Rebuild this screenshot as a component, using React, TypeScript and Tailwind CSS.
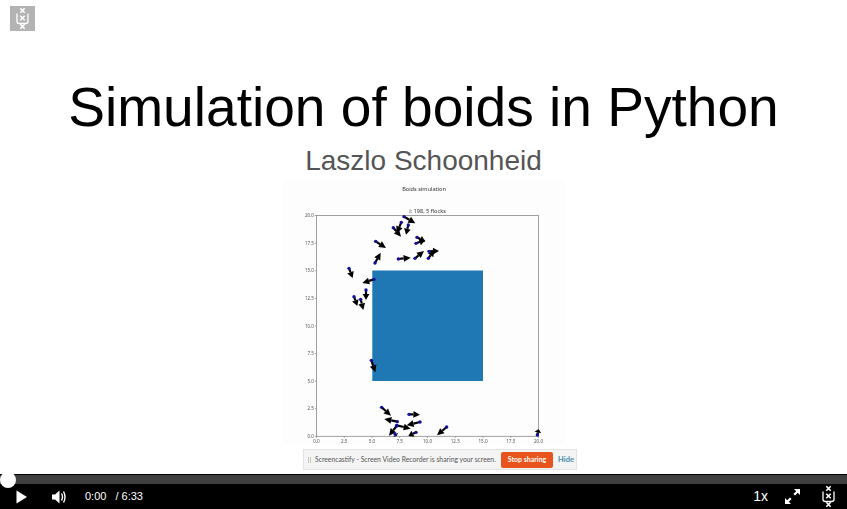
const z2: number[][] = [
  [372,110,406,130],[364,127,350,160],[340,143,363,170],[385,135,378,164],[411,172,436,185],[408,190,436,180],
  [287,184,318,204],[285,249,302,218],[355,237,392,233],[405,235,432,213],[445,235,462,212],[447,214,477,213],
  [207,265,218,294],[282,298,247,309],[258,330,258,360],[222,350,232,378],[242,358,250,390],
];
const z3: number[][] = [
  [274,91,286,127],[305,232,333,257],[387,253,420,254],[352,275,313,267],[420,276,380,286],[350,286,392,296],
  [350,288,327,317],[500,291,471,316],[408,307,385,318],[345,312,350,318],[772,315,776,297],
];
const arrows = [
  ...z2.map(([a,b,c,d]) => [280+a/3,180+b/3,280+c/3,180+d/3]),
  ...z3.map(([a,b,c,d]) => [280+a/3,330+b/3,280+c/3,330+d/3]),
];
const xt = ["0.0","2.5","5.0","7.5","10.0","12.5","15.0","17.5","20.0"];

function Arrow({ a }: { a: number[] }) {
  const [x1,y1,x2,y2] = a;
  const dx = x2-x1, dy = y2-y1, l = Math.hypot(dx,dy) || 1;
  const ux = dx/l, uy = dy/l, h = Math.min(7, l*0.6), w = 3.4;
  const bx = x2-ux*h, by = y2-uy*h;
  return (
    <g>
      <line x1={x1} y1={y1} x2={bx} y2={by} stroke="#000" strokeWidth={2.2} />
      <polygon points={`${x2},${y2} ${bx-uy*w},${by+ux*w} ${bx+uy*w},${by-ux*w}`} fill="#000" />
      <circle cx={x1} cy={y1} r={1.7} fill="#14109e" />
    </g>
  );
}

function Chart() {
  return (
    <svg width="282" height="264" viewBox="283 181 282 264" className="block bg-[#fdfdfd]" style={{ filter: "blur(0.35px)" }}>
      <text x="424" y="190.5" fontSize="5.6" textAnchor="middle" fill="#333" fontFamily="Noto Sans">Boids simulation</text>
      <text x="427.5" y="213" fontSize="5.6" textAnchor="middle" fill="#333" fontFamily="Noto Sans">i: 198, 5 flocks</text>
      <rect x="372.3" y="270.5" width="110.7" height="110.5" fill="#1f77b4" />
      <rect x="316.5" y="215.5" width="222" height="220.8" fill="none" stroke="#8a8a8a" strokeWidth="0.8" />
      {xt.map((t,i) => {
        const x = 316.5+i*27.75;
        const y = 436.3-i*27.6;
        return (
          <g key={t}>
            <line x1={x} y1={436.3} x2={x} y2={438} stroke="#777" strokeWidth="0.6" />
            <text x={x} y={442.5} fontSize="4.6" textAnchor="middle" fill="#555" fontFamily="Noto Sans">{t}</text>
            <line x1={314.8} y1={y} x2={316.5} y2={y} stroke="#777" strokeWidth="0.6" />
            <text x={314} y={y+1.6} fontSize="4.6" textAnchor="end" fill="#555" fontFamily="Noto Sans">{t}</text>
          </g>
        );
      })}
      {arrows.map((a,i) => <Arrow key={i} a={a} />)}
    </svg>
  );
}

function Uva({ size, fg, className }: { size: number; fg: string; className?: string }) {
  const X = (cx: number, cy: number) => (
    <path d={`M${cx-2.2} ${cy-2.2}L${cx+2.2} ${cy+2.2}M${cx+2.2} ${cy-2.2}L${cx-2.2} ${cy+2.2}`} stroke={fg} strokeWidth="1.6" fill="none" />
  );
  return (
    <svg width={size} height={size} viewBox="0 0 25 25" className={className}>
      {X(12.5,4.5)}
      {X(12.5,12)}
      {X(12.5,20.5)}
      <path d="M7 7.5V15.5Q7 17.5 9.5 17.5H15.5Q18 17.5 18 15.5V7.5" stroke={fg} strokeWidth="1.3" fill="none" />
    </svg>
  );
}

export default function App() {
  return (
    <div className="w-[847px] h-[509px] bg-white flex flex-col overflow-hidden font-['Liberation_Sans',sans-serif]">
      <div className="h-[474px] flex flex-col items-center relative">
        <div className="absolute left-[10px] top-[6px] w-[25px] h-[25px] bg-[#b3b3b3]">
          <Uva size={25} fg="#ffffff" />
        </div>
        <h1 className="mt-[72px] text-[55.1px] leading-[70px] text-black whitespace-nowrap">Simulation of boids in Python</h1>
        <p className="text-[28px] leading-[37px] mb-[2px] text-[#555555] whitespace-nowrap">Laszlo Schoonheid</p>
        <Chart />
        <div className="mt-[4px] ml-[33px] w-[274px] h-[21px] shrink-0 flex items-center bg-[#f4f4f4] border border-[#e4e4e4] pl-[4px] font-['Lato',sans-serif]">
          <span className="w-[3px] h-[6px] border-x border-[#c4c4c4] mr-[4px] shrink-0" />
          <span className="w-[186px] shrink-0 text-[6.8px] text-[#555555] whitespace-nowrap">Screencastify - Screen Video Recorder is sharing your screen.</span>
          <span className="w-[52px] h-[16px] shrink-0 bg-[#e8551c] rounded-[2px] text-white text-[7px] font-bold flex items-center justify-center">Stop sharing</span>
          <span className="ml-[5px] text-[#4a8bab] text-[7.5px] font-bold">Hide</span>
        </div>
      </div>
      <div className="flex-1 bg-black relative">
        <div className="mt-[1px] h-[9px] bg-[#3f3f3f]" />
        <div className="absolute left-0 top-[-2px] w-4 h-4 rounded-full bg-white" />
        <div className="h-[25px] flex items-center">
          <svg width="11" height="14" viewBox="0 0 11 14" className="ml-[16px]"><path d="M0.5 0.5L11 7L0.5 13.5Z" fill="#fff" /></svg>
          <svg width="15" height="14" viewBox="0 0 15 14" className="ml-[25px]">
            <path d="M0 4.5H3L7.5 0.5V13.5L3 9.5H0Z" fill="#fff" />
            <path d="M9.5 3.5Q11.5 7 9.5 10.5M11.5 1.5Q14.5 7 11.5 12.5" stroke="#fff" strokeWidth="1.4" fill="none" />
          </svg>
          <span className="ml-[18px] text-[11px] text-white">0:00</span>
          <span className="ml-[9px] text-[11px] text-white whitespace-pre">/ 6:33</span>
          <span className="ml-auto text-[14px] text-white">1x</span>
          <svg width="15" height="15" viewBox="0 0 15 15" className="ml-[17px]">
            <path d="M9 0H15V6L12.8 3.8L10 6.6L8.4 5L11.2 2.2ZM6 15H0V9L2.2 11.2L5 8.4L6.6 10L3.8 12.8Z" fill="#fff" />
          </svg>
          <Uva size={25} fg="#ffffff" className="ml-[16px] mr-[6px] -my-[4px] shrink-0" />
        </div>
      </div>
    </div>
  );
}
